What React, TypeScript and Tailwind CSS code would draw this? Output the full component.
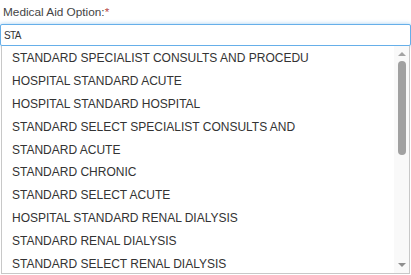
import { useState } from "react"

const options = [
  "STANDARD SPECIALIST CONSULTS AND PROCEDU",
  "HOSPITAL STANDARD ACUTE",
  "HOSPITAL STANDARD HOSPITAL",
  "STANDARD SELECT SPECIALIST CONSULTS AND",
  "STANDARD ACUTE",
  "STANDARD CHRONIC",
  "STANDARD SELECT ACUTE",
  "HOSPITAL STANDARD RENAL DIALYSIS",
  "STANDARD RENAL DIALYSIS",
  "STANDARD SELECT RENAL DIALYSIS",
]

export default function App() {
  const [query, setQuery] = useState("STA")

  return (
    <div className="h-[275px] w-[411px] overflow-hidden bg-white font-['Liberation_Sans',Arial,sans-serif] text-[12px] text-[#333]">
      <label className="block pl-[3px] pt-[5px] text-[11.8px] leading-[15px] text-[#444]">
        Medical Aid Option:<span className="text-[#b94a48]">*</span>
      </label>
      <div className="pt-[4px]">
        <input
          value={query}
          onChange={(e) => setQuery(e.target.value)}
          autoFocus
          className="block h-[22px] w-[411px] rounded-[2px] border border-[#66afe9] bg-white px-[3px] text-[10px] tracking-[-0.6px] text-[#333] caret-[#222] shadow-[0_0_4px_rgba(102,175,233,0.6)] outline-none"
        />
      </div>
      <div className="ml-[1px] flex h-[228px] w-[409px] border border-t-0 border-[#c8c8c8] bg-white">
        <ul className="flex-1 pt-[1px]">
          {options.map((o) => (
            <li key={o} className="flex h-[22.8px] items-center pl-[10px] text-[12px] text-[#333]">
              {o}
            </li>
          ))}
        </ul>
        <div className="flex w-[15px] flex-col items-center bg-[#f9f9f9]">
          <div className="mt-[6px] h-0 w-0 border-x-[4px] border-b-[4px] border-x-transparent border-b-[#a3a3a3]" />
          <div className="mt-[5px] h-[94px] w-[8px] rounded-full bg-[#a1a1a1]" />
          <div className="flex-1" />
          <div className="mb-[6px] h-0 w-0 border-x-[4px] border-t-[4px] border-x-transparent border-t-[#8f8f8f]" />
        </div>
      </div>
    </div>
  )
}
